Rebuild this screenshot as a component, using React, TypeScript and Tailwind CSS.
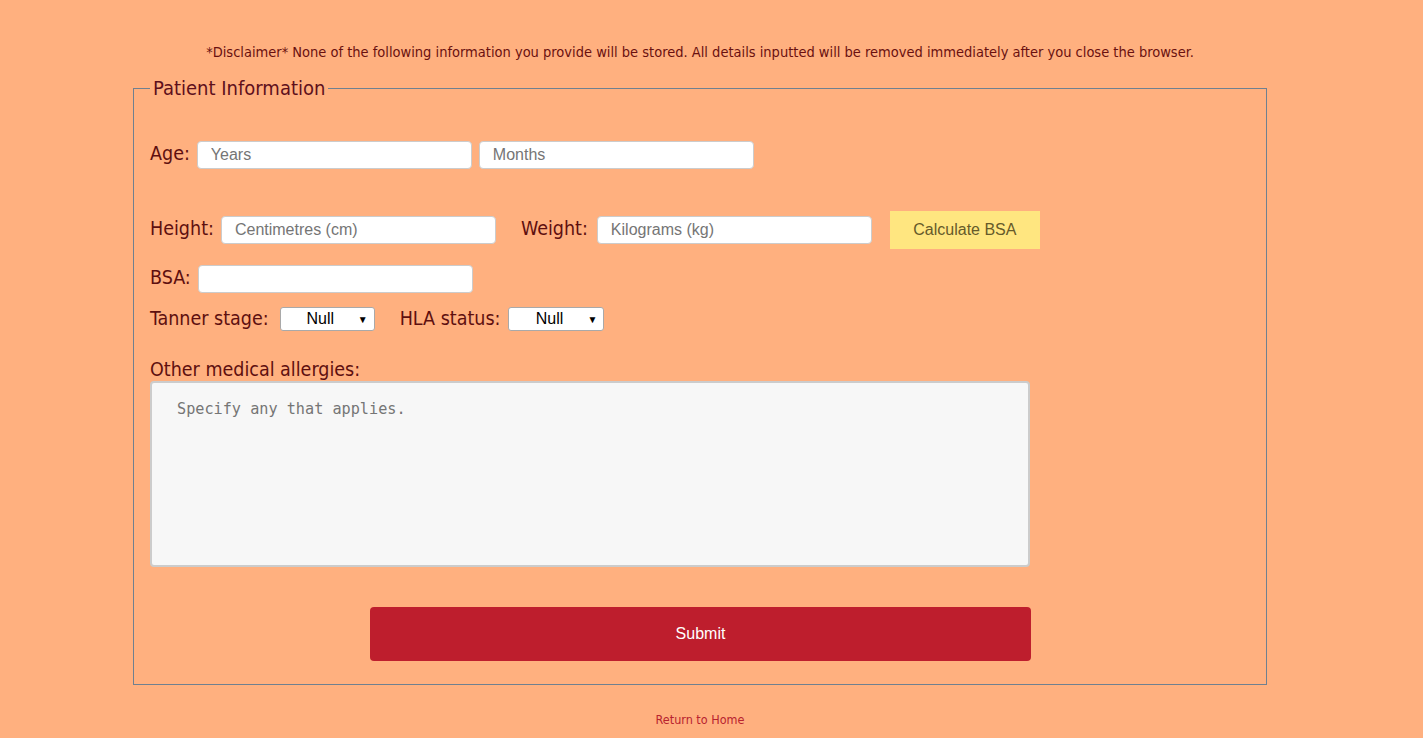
import React from "react";

const tahoma = "font-['DejaVu_Sans_Condensed','DejaVu_Sans',sans-serif]";
const arial = "font-['Liberation_Sans',Arial,sans-serif]";

function TextInput({ placeholder, w = "w-[275px]" }: { placeholder?: string; w?: string }) {
  return (
    <input
      type="text"
      placeholder={placeholder}
      className={`${w} h-[28px] bg-white border border-[#cccccc] rounded-[4px] pl-[13px] text-[16px] ${arial} text-black placeholder:text-[#757575] outline-none`}
    />
  );
}

function FakeSelect({ w }: { w: string }) {
  return (
    <div
      className={`${w} h-[24px] bg-white border border-[#a9a9a9] rounded-[3px] flex items-center ${arial} text-[16px] text-black`}
    >
      <span className="flex-1 text-center pl-[2px]">Null</span>
      <span className="text-[10px] pr-[6px]">▼</span>
    </div>
  );
}

export default function App() {
  return (
    <div className="min-h-[738px] w-full bg-[#ffb07f]">
      <div className="w-[1400px]">
        <div className={`pt-[43px] text-center text-[14.5px] leading-[18px] text-[#6a1010] ${tahoma}`}>
          *Disclaimer* None of the following information you provide will be stored. All details inputted will be removed immediately after you close the browser.
        </div>
        <fieldset className="mt-[15px] ml-[133px] w-[1134px] border border-[#6f8090] pl-[16px] pb-[23px]">
          <legend className={`px-[3px] text-[20px] leading-[24px] text-[#5e0f1c] ${tahoma}`}>
            Patient Information
          </legend>
          <div className={`${tahoma} text-[19.5px] text-[#5e0f0f]`}>
            <div className="mt-[41px] h-[28px] flex items-center">
              <span className="-mt-[3px] mr-[7px]">Age:</span>
              <TextInput placeholder="Years" />
              <span className="w-[7px]" />
              <TextInput placeholder="Months" />
            </div>
            <div className="mt-[42px] h-[38px] flex items-center">
              <span className="-mt-[3px] mr-[7px]">Height:</span>
              <TextInput placeholder="Centimetres (cm)" />
              <span className="-mt-[3px] ml-[25px] mr-[9px]">Weight:</span>
              <TextInput placeholder="Kilograms (kg)" />
              <button className={`ml-[18px] w-[150px] h-[38px] bg-[#ffe680] text-[#665a2a] text-[16px] ${arial}`}>
                Calculate BSA
              </button>
            </div>
            <div className="mt-[16px] h-[28px] flex items-center">
              <span className="-mt-[3px] mr-[7px]">BSA:</span>
              <TextInput />
            </div>
            <div className="mt-[14px] h-[24px] flex items-center">
              <span className="-mt-[1px] mr-[11px]">Tanner stage:</span>
              <FakeSelect w="w-[95px]" />
              <span className="-mt-[1px] ml-[25px] mr-[8px]">HLA status:</span>
              <FakeSelect w="w-[96px]" />
            </div>
            <div className="mt-[28px] h-[22px] leading-[22px]">Other medical allergies:</div>
            <textarea
              placeholder="Specify any that applies."
              className="block w-[880px] h-[186px] bg-[#f7f7f7] border-2 border-[#cccccc] rounded-[4px] pl-[25px] pt-[15px] text-[15.2px] font-['DejaVu_Sans_Mono',monospace] text-black placeholder:text-[#757575] resize-none outline-none"
            />
            <button
              className={`block mt-[40px] ml-[220px] w-[661px] h-[54px] bg-[#be1e2d] rounded-[4px] text-white text-[16px] ${arial}`}
            >
              Submit
            </button>
          </div>
        </fieldset>
        <div className={`mt-[27px] text-center text-[12.5px] leading-[16px] text-[#b8232f] ${tahoma}`}>
          Return to Home
        </div>
      </div>
    </div>
  );
}
